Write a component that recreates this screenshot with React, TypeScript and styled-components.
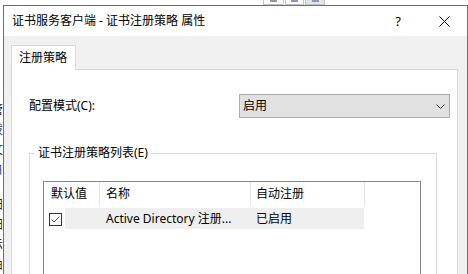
import React from "react";
import styled, { createGlobalStyle } from "styled-components";

const GlobalStyle = createGlobalStyle`
  html, body {
    margin: 0;
    padding: 0;
    overflow: hidden;
  }
  body {
    font-family: "Noto Sans", "Noto Sans CJK SC", sans-serif;
    font-size: 12px;
    color: #000;
  }
`;

const Desktop = styled.div`
  position: relative;
  width: 468px;
  height: 274px;
  overflow: hidden;
  background: #fff;
`;

// the window that sits behind the dialog, only slivers of it show
const BackWindow = styled.div`
  display: flex;
  flex-direction: column;
  height: 100%;
`;

const BackToolbar = styled.div`
  display: flex;
  gap: 1px;
  height: 5px;
  padding-left: 263px;
`;

const BackButton = styled.div<{ $pressed?: boolean; $w: number }>`
  box-sizing: border-box;
  width: ${(p) => p.$w}px;
  height: 5px;
  border: 1px solid #c4c4c4;
  border-top: none;
  background: ${(p) => (p.$pressed ? "#e3e3e3" : "#fff")};
  display: flex;
  justify-content: center;
`;

const BackIcon = styled.div`
  width: 7px;
  height: 2px;
  background: #8a9aab;
`;

const BackSide = styled.div`
  width: 3px;
  overflow: hidden;
  display: flex;
  flex-direction: column;
  padding-top: 43px;
`;

const SideChar = styled.div<{ $color?: string }>`
  height: 20px;
  line-height: 20px;
  margin-left: -9px;
  white-space: nowrap;
  font-family: "Noto Sans CJK SC", sans-serif;
  color: ${(p) => p.$color || "#222"};
`;

const Dialog = styled.div`
  position: absolute;
  left: 3px;
  top: 5px;
  width: 465px;
  height: 300px;
  box-sizing: border-box;
  border: 1px solid #6f6f6f;
  background: #f0f0f0;
  display: flex;
  flex-direction: column;
`;

const TitleBar = styled.div`
  height: 30px;
  flex: none;
  background: #fff;
  display: flex;
  align-items: center;
  padding-left: 8px;
`;

const Title = styled.div`
  flex: 1;
  line-height: 16px;
  white-space: nowrap;
`;

const CaptionButton = styled.div`
  width: 46px;
  height: 30px;
  display: flex;
  align-items: center;
  justify-content: center;
  font-size: 13px;
`;

const Body = styled.div`
  flex: 1;
  display: flex;
  flex-direction: column;
  padding: 9px 9px 0 7px;
`;

const TabStrip = styled.div`
  display: flex;
`;

const Tab = styled.div`
  position: relative;
  z-index: 1;
  box-sizing: border-box;
  height: 25px;
  margin-bottom: -1px;
  padding: 0 8px 0 7px;
  border: 1px solid #d9d9d9;
  border-bottom: none;
  background: #fff;
  line-height: 24px;
`;

const Panel = styled.div`
  flex: 1;
  display: flex;
  flex-direction: column;
  border: 1px solid #d9d9d9;
  background: #fff;
  padding: 24px 7px 0 17px;
`;

const ConfigRow = styled.div`
  display: flex;
  align-items: center;
  height: 24px;
`;

const Label = styled.div`
  flex: 1;
  line-height: 16px;
`;

const Select = styled.div`
  box-sizing: border-box;
  width: 211px;
  height: 24px;
  border: 1px solid #adadad;
  background: #e1e1e1;
  display: flex;
  align-items: center;
  justify-content: space-between;
  padding: 0 4px 0 3px;
  line-height: 16px;
`;

const GroupBox = styled.fieldset`
  margin: 27px 13px 0 0;
  padding: 0;
  min-width: 0;
  height: 160px;
  border: 1px solid #dcdcdc;
`;

const Legend = styled.legend`
  margin-left: 5px;
  padding: 0 3px;
  line-height: 16px;
`;

const ListView = styled.div`
  margin: 20px 15px 0 13px;
  height: 140px;
  border: 1px solid #828790;
  background: #fff;
`;

const HeaderRow = styled.div`
  display: flex;
  height: 24px;
`;

const HeaderCell = styled.div<{ $w: number; $pad: number }>`
  box-sizing: border-box;
  width: ${(p) => p.$w}px;
  padding-left: ${(p) => p.$pad}px;
  border-right: 1px solid #e5e5e5;
  line-height: 24px;
`;

const ItemRow = styled.div`
  display: flex;
  align-items: center;
  height: 21px;
  margin-top: 2px;
`;

const CheckCell = styled.div`
  width: 21px;
  display: flex;
  padding-left: 5px;
  box-sizing: border-box;
`;

const CheckBox = styled.div`
  box-sizing: border-box;
  width: 13px;
  height: 13px;
  border: 1px solid #333;
  display: flex;
  align-items: center;
  justify-content: center;
  margin-top: 1px;
`;

const Selection = styled.div`
  display: flex;
  height: 21px;
  background: #efefef;
`;

const ItemCell = styled.div<{ $w: number; $pad: number }>`
  box-sizing: border-box;
  width: ${(p) => p.$w}px;
  padding-left: ${(p) => p.$pad}px;
  line-height: 21px;
  white-space: nowrap;
`;

const sideChars: { ch: string; color?: string }[] = [
  { ch: "0" },
  { ch: "" },
  { ch: "" },
  { ch: "管" },
  { ch: "泼", color: "#1d3a6b" },
  { ch: "文" },
  { ch: "ヨ", color: "#1e4fa8" },
  { ch: "" },
  { ch: "田", color: "#3a2a10" },
  { ch: "田", color: "#3a2a10" },
  { ch: "示" },
  { ch: "由", color: "#3a2a10" },
];

export default function App() {
  return (
    <Desktop>
      <GlobalStyle />
      <BackWindow>
        <BackToolbar>
          <BackButton $w={21}><BackIcon /></BackButton>
          <BackButton $w={19}><BackIcon /></BackButton>
          <BackButton $w={20} $pressed><BackIcon /></BackButton>
        </BackToolbar>
        <BackSide>
          {sideChars.map((c, i) => (
            <SideChar key={i} $color={c.color}>{c.ch}</SideChar>
          ))}
        </BackSide>
      </BackWindow>

      <Dialog>
        <TitleBar>
          <Title>证书服务客户端 - 证书注册策略 属性</Title>
          <CaptionButton>?</CaptionButton>
          <CaptionButton>
            <svg width="11" height="11" viewBox="0 0 11 11">
              <path d="M0.5 0.5 L10.5 10.5 M10.5 0.5 L0.5 10.5" stroke="#000" strokeWidth="1" fill="none" />
            </svg>
          </CaptionButton>
        </TitleBar>
        <Body>
          <TabStrip>
            <Tab>注册策略</Tab>
          </TabStrip>
          <Panel>
            <ConfigRow>
              <Label>配置模式(C):</Label>
              <Select>
                <span>启用</span>
                <svg width="9" height="5" viewBox="0 0 9 5">
                  <path d="M0.5 0.5 L4.5 4.5 L8.5 0.5" stroke="#333" strokeWidth="1" fill="none" />
                </svg>
              </Select>
            </ConfigRow>
            <GroupBox>
              <Legend>证书注册策略列表(E)</Legend>
              <ListView>
                <HeaderRow>
                  <HeaderCell $w={56} $pad={7}>默认值</HeaderCell>
                  <HeaderCell $w={151} $pad={6}>名称</HeaderCell>
                  <HeaderCell $w={114} $pad={5}>自动注册</HeaderCell>
                </HeaderRow>
                <ItemRow>
                  <CheckCell>
                    <CheckBox>
                      <svg width="11" height="11" viewBox="0 0 11 11">
                        <path d="M1.5 5.5 L4 8 L9.5 2.5" stroke="#555" strokeWidth="1" fill="none" />
                      </svg>
                    </CheckBox>
                  </CheckCell>
                  <Selection>
                    <ItemCell $w={186} $pad={41}>Active Directory 注册...</ItemCell>
                    <ItemCell $w={113} $pad={5}>已启用</ItemCell>
                  </Selection>
                </ItemRow>
              </ListView>
            </GroupBox>
          </Panel>
        </Body>
      </Dialog>
    </Desktop>
  );
}
